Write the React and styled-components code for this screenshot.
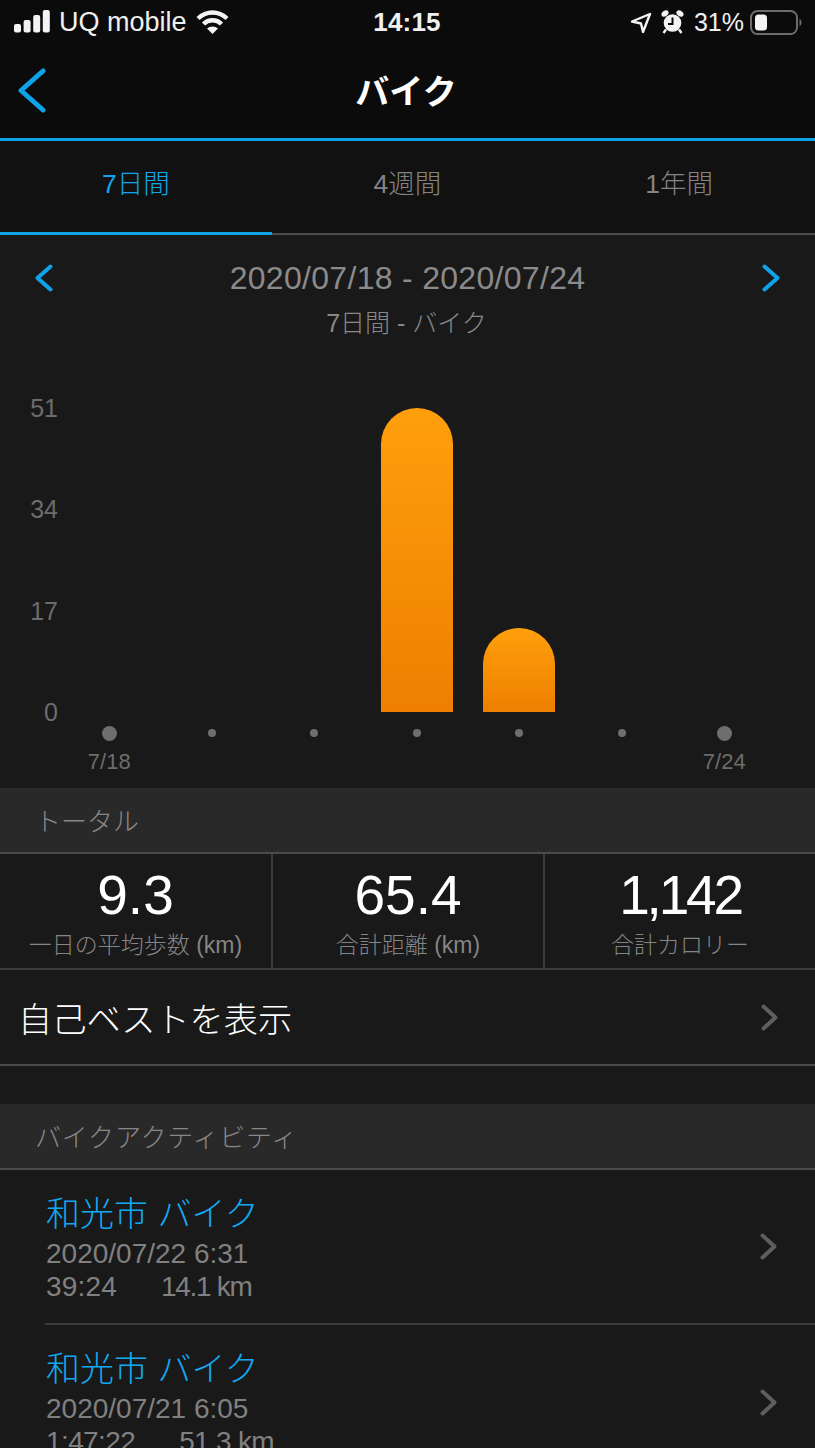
import React from "react";
import styled, { createGlobalStyle } from "styled-components";

const Global = createGlobalStyle`
  html, body { margin: 0; padding: 0; background: #191919; }
  * { box-sizing: border-box; }
`;
const FONT = `"Liberation Sans", "Noto Sans CJK JP", sans-serif`;

const Page = styled.div`
  width: 815px; height: 1448px; overflow: hidden; background: #191919;
  font-family: ${FONT}; font-weight: 300; color: #fff;
`;
const Status = styled.div`
  height: 44px; background: #0b0b0b; display: flex; align-items: center;
  padding: 0 13px 0 14px; font-size: 27px; color: #f0f0f0;
`;
const Carrier = styled.div`display: flex; align-items: center; gap: 9px; flex: 1;`;
const Clock = styled.div`font-weight: 700; font-size: 26px; flex: none; letter-spacing: .2px; margin-left: -2px;`;
const StatusRight = styled.div`flex: 1; display: flex; justify-content: flex-end; align-items: center;`;
const ArrowIcon = styled.svg`margin-top: 2px;`;
const AlarmIcon = styled.svg`margin-left: 9px;`;
const Percent = styled.span`margin: 0 6px 0 10px; font-size: 25px;`;
const Nav = styled.div`
  height: 94px; background: #0b0b0b; display: flex; align-items: center; justify-content: center;
  position: relative;
`;
const BackWrap = styled.div`position: absolute; left: 18px; top: 24px; line-height: 0;`;
const Title = styled.div`font-size: 34px; font-weight: 700; margin: -3px 3px 0 0;`;
const BlueRule = styled.div`height: 3px; background: #0ea2e8;`;
const Tabs = styled.div`
  height: 94px; background: #111; display: grid; grid-template-columns: repeat(3, 1fr);
  border-bottom: 2px solid #4d4d4d;
`;
const Tab = styled.div`
  display: flex; align-items: center; justify-content: center; position: relative;
  font-size: 26.5px; color: ${p => (p.$active ? "#10a6ee" : "#848484")}; padding-bottom: 12px;
  ${p => p.$active && `&::after { content: ""; position: absolute; left: 0; right: 0; bottom: -2px; height: 3px; background: #0ea2e8; }`}
`;
const Chart = styled.div`height: 553px; padding-top: 24px;`;
const RangeRow = styled.div`display: flex; align-items: center; justify-content: space-between; padding: 0 35px; height: 38px;`;
const Range = styled.div`font-size: 32px; color: #8b8b8b; letter-spacing: .3px;`;
const Sub = styled.div`text-align: center; font-size: 25px; color: #888; margin-top: 8px; height: 36px; line-height: 36px; margin-left: -2px;`;
const Plot = styled.div`display: flex; margin-top: 67px;`;
const YAxis = styled.div`
  width: 58px; height: 304px; display: flex; flex-direction: column; justify-content: space-between;
  align-items: flex-end; font-size: 25px; line-height: 0; color: #6c6c6c;
`;
const Columns = styled.div`display: grid; grid-template-columns: repeat(7, 102.5px);`;
const Col = styled.div`height: 304px; display: flex; align-items: flex-end; justify-content: center;`;
const Bar = styled.div`
  width: 72px; border-radius: 36px 36px 0 0; background: linear-gradient(#ff9f0c, #ee7f00);
`;
const Dots = styled.div`display: grid; grid-template-columns: repeat(7, 102.5px); margin: 13px 0 0 58px; height: 16px;`;
const DotCell = styled.div`display: flex; align-items: center; justify-content: center;`;
const Dot = styled.div`
  width: ${p => (p.$big ? 15 : 8)}px; height: ${p => (p.$big ? 15 : 8)}px; border-radius: 50%; background: #6e6e6e;
`;
const DayLabels = styled.div`
  display: grid; grid-template-columns: repeat(7, 102.5px); margin: 6px 0 0 58px;
  font-size: 22px; line-height: 30px; color: #6c6c6c; text-align: center;
`;
const Section = styled.div`
  background: #292929; border-bottom: 2px solid #4a4a4a; height: 66px; display: flex; align-items: center;
  padding: 0 0 2px 35px; font-size: 26px; color: #888; letter-spacing: ${p => p.$spread || 0}px;
`;
const Stats = styled.div`
  display: grid; grid-template-columns: 273px 272px 1fr; height: 116px; border-bottom: 2px solid #3c3c3c;
`;
const Stat = styled.div`
  text-align: center; padding-top: 11px; border-right: ${p => (p.$last ? 0 : "2px solid #3c3c3c")};
`;
const StatValue = styled.div`font-size: 55px; line-height: 60px; color: #fff; letter-spacing: ${p => p.$tight || 0}px;`;
const StatLabel = styled.div`font-size: 23px; line-height: 30px; color: #858585; margin-top: 5px;`;
const ShowRow = styled.div`
  height: 96px; display: flex; align-items: center; justify-content: space-between;
  padding: 0 37px 0 18px; border-bottom: 2px solid #4a4a4a; font-size: 34.2px; color: #fff;
`;
const Spacer = styled.div`height: 38px;`;
const Activity = styled.div`
  margin-left: 45px; height: 155px; padding: 0 38px 0 1px; display: flex; align-items: center; justify-content: space-between;
  border-bottom: ${p => (p.$last ? 0 : "2px solid #3c3c3c")};
`;
const ActivityBody = styled.div`align-self: flex-start; padding-top: 21px;`;
const ActivityTitle = styled.div`font-size: 34px; line-height: 46px; color: #12a9f2;`;
const Meta = styled.div`font-size: 28px; line-height: 33px; color: #808080; display: flex; gap: 44px;`;
const Narrow = styled.span`letter-spacing: ${p => p.$by}px;`;

const ChevR = ({ color = "#5e5e5e", w = 17, h = 27, sw = 4 }) => (
  <svg width={w} height={h} viewBox={`0 0 ${w} ${h}`} fill="none">
    <path d={`M${sw / 2 + .5} ${sw / 2 + .5} L${w - sw / 2 - .5} ${h / 2} L${sw / 2 + .5} ${h - sw / 2 - .5}`} stroke={color} strokeWidth={sw} strokeLinecap="round" strokeLinejoin="round" />
  </svg>
);
const ChevL = ({ color, w, h, sw }) => (
  <svg width={w} height={h} viewBox={`0 0 ${w} ${h}`} fill="none">
    <path d={`M${w - sw / 2 - .5} ${sw / 2 + .5} L${sw / 2 + .5} ${h / 2} L${w - sw / 2 - .5} ${h - sw / 2 - .5}`} stroke={color} strokeWidth={sw} strokeLinecap="round" strokeLinejoin="round" />
  </svg>
);

const activities = [
  { date: "2020/07/22 6:31", time: "39:24", dist: "14.1 km", last: false, timeBy: 0.2, distBy: -1.3 },
  { date: "2020/07/21 6:05", time: "1:47:22", dist: "51.3 km", last: true, timeBy: -0.6, distBy: -0.7 },
];

export default function App() {
  return (
    <Page>
      <Global />
      <Status>
        <Carrier>
          <svg width="36" height="24" viewBox="0 0 36 24" fill="#f4f4f4">
            <rect x="0" y="14" width="7" height="8.5" rx="2" />
            <rect x="9.6" y="10" width="7" height="12.5" rx="2" />
            <rect x="19.2" y="5" width="7" height="17.5" rx="2" />
            <rect x="28.8" y="0" width="7" height="22.5" rx="2" />
          </svg>
          <span>UQ mobile</span>
          <svg width="33" height="24" viewBox="0 0 33 24" fill="none" stroke="#f4f4f4" strokeWidth="4.4">
            <path d="M2 8.5 C10.5 0.5 22.5 0.5 31 8.5" />
            <path d="M7.5 14 C12.5 9 20.5 9 25.5 14" />
            <path d="M16.5 24 L11 18.5 C14 15.7 19 15.7 22 18.5 Z" fill="#f4f4f4" stroke="none" />
          </svg>
        </Carrier>
        <Clock>14:15</Clock>
        <StatusRight>
          <ArrowIcon width="22" height="22" viewBox="0 0 22 22" fill="none" stroke="#f4f4f4" strokeWidth="2.4" strokeLinejoin="round">
            <path d="M2 9.5 L20 2 L13 20 L11 11.5 Z" />
          </ArrowIcon>
          <AlarmIcon width="23" height="24" viewBox="0 0 23 24">
            <circle cx="11.5" cy="13" r="8.8" fill="#f4f4f4" />
            <path d="M11.5 7.5 V14 H7" stroke="#0b0b0b" strokeWidth="2" fill="none" />
            <ellipse cx="4" cy="3.5" rx="3.8" ry="2.8" transform="rotate(-35 4 3.5)" fill="#f4f4f4" />
            <ellipse cx="19" cy="3.5" rx="3.8" ry="2.8" transform="rotate(35 19 3.5)" fill="#f4f4f4" />
            <path d="M5 19.5 L2.5 23 M18 19.5 L20.5 23" stroke="#f4f4f4" strokeWidth="2.4" />
          </AlarmIcon>
          <Percent>31%</Percent>
          <svg width="52" height="25" viewBox="0 0 52 25">
            <rect x="1" y="1" width="46" height="23" rx="6.5" fill="none" stroke="#6d6d6d" strokeWidth="2" />
            <rect x="5" y="4.5" width="12" height="16" rx="3.5" fill="#f4f4f4" />
            <path d="M49.5 9 C51 9.5 51.5 11 51.5 12.5 C51.5 14 51 15.5 49.5 16 Z" fill="#6d6d6d" />
          </svg>
        </StatusRight>
      </Status>
      <Nav>
        <BackWrap><ChevL color="#0ea2e8" w={28} h={45} sw={5} /></BackWrap>
        <Title>バイク</Title>
      </Nav>
      <BlueRule />
      <Tabs>
        <Tab $active>7日間</Tab>
        <Tab>4週間</Tab>
        <Tab>1年間</Tab>
      </Tabs>
      <Chart>
        <RangeRow>
          <ChevL color="#0ea2e8" w={18} h={28} sw={4} />
          <Range>2020/07/18 - 2020/07/24</Range>
          <ChevR color="#0ea2e8" w={18} h={28} sw={4} />
        </RangeRow>
        <Sub>7日間 - バイク</Sub>
        <Plot>
          <YAxis>
            <span>51</span><span>34</span><span>17</span><span>0</span>
          </YAxis>
          <Columns>
            {[0, 0, 0, 304, 84, 0, 0].map((h, i) => (
              <Col key={i}>{h > 0 && <Bar style={{ height: h }} />}</Col>
            ))}
          </Columns>
        </Plot>
        <Dots>
          {[1, 0, 0, 0, 0, 0, 1].map((b, i) => (
            <DotCell key={i}><Dot $big={!!b} /></DotCell>
          ))}
        </Dots>
        <DayLabels>
          <span>7/18</span><span /><span /><span /><span /><span /><span>7/24</span>
        </DayLabels>
      </Chart>
      <Section>トータル</Section>
      <Stats>
        <Stat><StatValue>9.3</StatValue><StatLabel>一日の平均歩数 (km)</StatLabel></Stat>
        <Stat><StatValue>65.4</StatValue><StatLabel>合計距離 (km)</StatLabel></Stat>
        <Stat $last><StatValue $tight={-3.2}>1,142</StatValue><StatLabel>合計カロリー</StatLabel></Stat>
      </Stats>
      <ShowRow>
        <span>自己ベストを表示</span>
        <ChevR />
      </ShowRow>
      <Spacer />
      <Section $spread={0.8}>バイクアクティビティ</Section>
      {activities.map(a => (
        <Activity key={a.date} $last={a.last}>
          <ActivityBody>
            <ActivityTitle>和光市 バイク</ActivityTitle>
            <Meta>{a.date}</Meta>
            <Meta><Narrow $by={a.timeBy}>{a.time}</Narrow><Narrow $by={a.distBy}>{a.dist}</Narrow></Meta>
          </ActivityBody>
          <ChevR />
        </Activity>
      ))}
    </Page>
  );
}
